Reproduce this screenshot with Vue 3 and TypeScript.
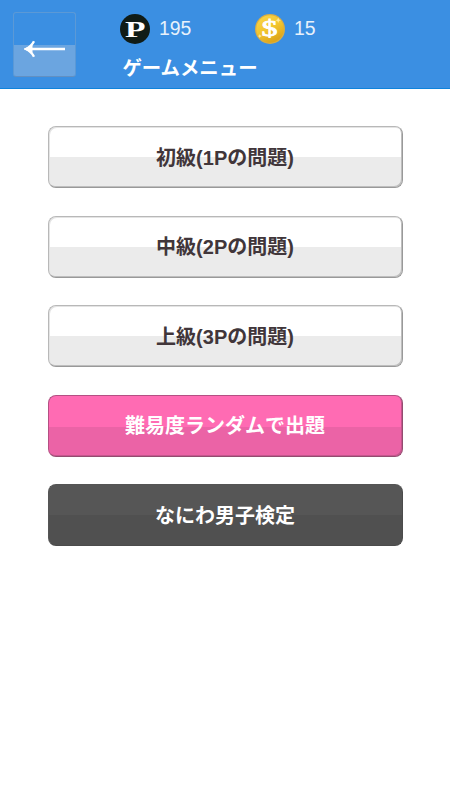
<script setup lang="ts">
interface MenuItem {
  label: string
  tone: 'light' | 'pink' | 'dark'
}

const points: number = 195
const coins: number = 15

const items: MenuItem[] = [
  { label: '初級(1Pの問題)', tone: 'light' },
  { label: '中級(2Pの問題)', tone: 'light' },
  { label: '上級(3Pの問題)', tone: 'light' },
  { label: '難易度ランダムで出題', tone: 'pink' },
  { label: 'なにわ男子検定', tone: 'dark' },
]
</script>

<template>
  <div class="screen">
    <header class="header">
      <button class="back" type="button" aria-label="戻る">
        <svg width="42" height="18" viewBox="0 0 42 18">
          <path d="M5 9H41" stroke="#fff" stroke-width="2.3" fill="none" />
          <path d="M10 1.2Q7.2 6.7 1.8 9Q7.2 11.3 10 16.8" stroke="#fff" stroke-width="2.4" fill="none" />
          <path d="M0 9L8.5 4.4V13.6Z" fill="#fff" />
        </svg>
      </button>
      <div class="info">
        <div class="stats">
          <div class="stat points">
            <svg width="30" height="30" viewBox="0 0 30 30">
              <circle cx="15" cy="15" r="15" fill="#101c17" />
              <text class="letter" x="15.3" y="22.6" text-anchor="middle" textLength="20.5" lengthAdjust="spacingAndGlyphs">P</text>
            </svg>
            <span>{{ points }}</span>
          </div>
          <div class="stat">
            <svg width="30" height="30" viewBox="0 0 30 30">
              <defs>
                <linearGradient id="gold" x1="0" y1="0" x2="0.5" y2="1">
                  <stop offset="0" stop-color="#f8d64e" />
                  <stop offset="0.55" stop-color="#f3c62f" />
                  <stop offset="1" stop-color="#dda61c" />
                </linearGradient>
              </defs>
              <circle cx="15" cy="15" r="15" fill="#d9ae43" />
              <circle cx="15" cy="15" r="13.7" fill="url(#gold)" />
              <path d="M23.2 3.5L24 5.4L25.9 6.2L24 7L23.2 8.9L22.4 7L20.5 6.2L22.4 5.4ZM4.8 20L5.4 21.5L6.9 22.1L5.4 22.7L4.8 24.2L4.2 22.7L2.7 22.1L4.2 21.5Z" fill="#fdeb9c" />
              <text class="dollar" x="14.5" y="22.4" text-anchor="middle" textLength="16" lengthAdjust="spacingAndGlyphs">$</text>
            </svg>
            <span>{{ coins }}</span>
          </div>
        </div>
        <h1 class="title">ゲームメニュー</h1>
      </div>
    </header>
    <main class="menu">
      <button v-for="item in items" :key="item.label" type="button" class="item" :class="item.tone">
        {{ item.label }}
      </button>
    </main>
  </div>
</template>

<style>
body {
  margin: 0;
  background: #fff;
}
</style>

<style scoped>
.screen {
  width: 450px;
  height: 800px;
  background: #fff;
  font-family: "Liberation Sans", "Noto Sans CJK JP", sans-serif;
}

button {
  font-family: inherit;
  margin: 0;
}

.header {
  display: flex;
  box-sizing: border-box;
  height: 89px;
  padding: 12px 0 0 13px;
  background: #3b8fe2;
  border-bottom: 1px solid #0e83dc;
  color: #fff;
}

.back {
  display: flex;
  flex: none;
  align-items: center;
  justify-content: center;
  box-sizing: border-box;
  width: 63px;
  height: 65px;
  padding: 9px 0 0;
  border: 1px solid #5b99d6;
  border-bottom-color: #6290c2;
  border-radius: 3px;
  background: linear-gradient(#3b8fe2 32px, #6ba5e0 32px);
}

.info {
  display: flex;
  flex-direction: column;
  padding: 2px 0 0 44px;
}

.stats {
  display: flex;
}

.stat {
  display: flex;
  align-items: center;
  gap: 9px;
  height: 30px;
  color: #e8f1fb;
}

.stat span {
  font-size: 19.4px;
  line-height: 28px;
  padding-bottom: 2px;
}

.points {
  width: 135px;
}

.letter {
  font: bold 23px "Liberation Serif", serif;
  fill: #fff;
}

.dollar {
  font: 24px "Liberation Serif", serif;
  fill: #fff;
  stroke: #fff;
  stroke-width: 0.8px;
}

.title {
  margin: 9px 0 0 2.4px;
  font-size: 19.4px;
  font-weight: 700;
  line-height: 30px;
  white-space: nowrap;
}

.menu {
  display: flex;
  flex-direction: column;
  gap: 27.5px;
  padding: 37px 47px 0 48px;
}

.item {
  box-sizing: border-box;
  height: 62px;
  padding: 1px 1px 0 0;
  border: 1.5px solid;
  border-radius: 8px;
  font-size: 20px;
  font-weight: 700;
  line-height: 30px;
}

.light {
  color: #41363a;
  border-color: #b8b8b8 #999 #999 #b8b8b8;
  background: linear-gradient(#fff 50%, #ebebeb 50%);
  box-shadow: inset -1px -1px 0 #bebebe, inset 1px 1px 0 #e4e4e4;
}

.pink {
  color: #fff;
  border-color: #b45083 #934c70 #934c70 #b45083;
  background: linear-gradient(#ff6bb3 51%, #eb63a6 51%);
  box-shadow: inset -1px -1px 0 #c5578e;
}

.dark {
  color: #fff;
  border-color: #555 #4b4b4b #4b4b4b #555;
  background: linear-gradient(#565656 50%, #505050 50%);
}
</style>
